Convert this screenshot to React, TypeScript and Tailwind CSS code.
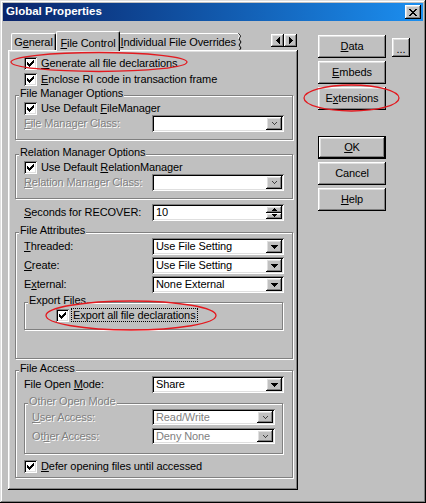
import React from 'react';

// classic 3D edges
const raised = 'shadow-[inset_-1px_-1px_0_#000,inset_1px_1px_0_#fff,inset_-2px_-2px_0_#808080,inset_2px_2px_0_#dfdfdf]';
const sunken = 'shadow-[inset_1px_1px_0_#808080,inset_-1px_-1px_0_#fff,inset_2px_2px_0_#000,inset_-2px_-2px_0_#dfdfdf]';
const etched = 'border border-[#808080] shadow-[inset_1px_1px_0_#fff,1px_1px_0_#fff]';
const dis = 'text-[#808080] [text-shadow:1px_1px_0_#fff]';

function CheckMark() {
  return (
    <svg width="7" height="7" viewBox="0 0 7 7" shapeRendering="crispEdges">
      <path d="M6 0h1v3h-1z M5 1h1v3h-1z M4 2h1v3h-1z M3 3h1v3h-1z M2 4h1v3h-1z M1 3h1v3h-1z M0 2h1v3h-1z" fill="#000" />
    </svg>
  );
}

function DownTri({ color = '#000' }: { color?: string }) {
  return (
    <svg width="7" height="4" viewBox="0 0 7 4" shapeRendering="crispEdges">
      <path d="M0 0h7v1h-7z M1 1h5v1h-5z M2 2h3v1h-3z M3 3h1v1h-1z" fill={color} />
    </svg>
  );
}

function Chevron() {
  return (
    <svg width="5" height="3" viewBox="0 0 5 3" shapeRendering="crispEdges">
      <path d="M0 0h1v1h-1z M4 0h1v1h-1z M1 1h1v1h-1z M3 1h1v1h-1z M2 2h1v1h-1z" fill="#404040" />
    </svg>
  );
}

function CheckBox({ children, className = '', focus = false }: { children: React.ReactNode; className?: string; focus?: boolean }) {
  return (
    <div className={`flex items-start ${className}`}>
      <span className={`mt-[1px] flex h-[13px] w-[13px] shrink-0 items-center justify-center bg-white ${sunken}`}>
        <CheckMark />
      </span>
      {focus ? (
        <span className="ml-[2px] border border-dotted border-black px-[1px] leading-[12px]">{children}</span>
      ) : (
        <span className="ml-[4px] leading-[15px]">{children}</span>
      )}
    </div>
  );
}

function Combo({ value = '', className = '', disabled = false }: { value?: string; className?: string; disabled?: boolean }) {
  return (
    <div className={`flex bg-white ${sunken} ${className}`}>
      <span className={`flex-1 self-center pl-[4px] leading-[13px] ${disabled ? 'text-[#808080]' : ''}`}>{value}</span>
      <span className={`my-[2px] mr-[2px] flex w-[16px] items-center justify-center bg-[#c0c0c0] ${raised}`}>
        {disabled ? <Chevron /> : <DownTri />}
      </span>
    </div>
  );
}

function Group({ label, className = '', disabled = false, children }: { label: string; className?: string; disabled?: boolean; children: React.ReactNode }) {
  return (
    <div className={`${etched} ${className}`}>
      <div className={`-mt-[9px] mb-[2px] ml-[3px] w-fit bg-[#c0c0c0] px-[1px] leading-[12px] ${disabled ? dis : ''}`}>{label}</div>
      {children}
    </div>
  );
}

function Btn({ children, className = '', def = false }: { children: React.ReactNode; className?: string; def?: boolean }) {
  if (def) {
    return (
      <div className={`border border-black ${className}`}>
        <div className={`flex h-full w-full items-center justify-center ${raised}`}>{children}</div>
      </div>
    );
  }
  return <div className={`flex items-center justify-center ${raised} ${className}`}>{children}</div>;
}

export default function App() {
  return (
    <div className="relative h-[503px] w-[426px] overflow-hidden bg-[#c0c0c0] font-['Liberation_Sans',Arial,sans-serif] text-[11px] tracking-[-0.1px] text-black shadow-[inset_-1px_-1px_0_#000,inset_1px_1px_0_#dfdfdf,inset_-2px_-2px_0_#808080,inset_2px_2px_0_#fff]">
      {/* title bar */}
      <div className="mx-[3px] mt-[3px] flex h-[18px] items-center justify-between bg-linear-to-r from-[#0a246a] to-[#1c8ff0]">
        <span className="pl-[3px] text-[11.5px] font-bold tracking-normal text-white">Global Properties</span>
        <span className={`mr-[2px] flex h-[14px] w-[16px] items-center justify-center bg-[#c0c0c0] ${raised}`}>
          <svg width="8" height="7" viewBox="0 0 8 7" shapeRendering="crispEdges">
            <path d="M0 0h2v1h-2z M6 0h2v1h-2z M1 1h2v1h-2z M5 1h2v1h-2z M2 2h4v1h-4z M3 3h2v1h-2z M2 4h4v1h-4z M1 5h2v1h-2z M5 5h2v1h-2z M0 6h2v1h-2z M6 6h2v1h-2z" fill="#000" />
          </svg>
        </span>
      </div>

      <div className="flex pl-[8px] pt-[10px]">
        {/* tab control */}
        <div className="w-[290px]">
          <div className="flex h-[19px] items-end pl-[3px]">
            <div className="flex h-[17px] w-[45px] items-center justify-center rounded-t-[2px] border-l border-t border-r border-white border-r-black pt-[1px] shadow-[inset_-1px_0_0_#808080]">
              G<u>e</u>neral
            </div>
            <div className="relative z-10 -mb-[1px] flex h-[20px] w-[64px] items-start justify-center rounded-t-[2px] border-l border-t border-r border-white border-r-black bg-[#c0c0c0] pt-[3px] shadow-[inset_-1px_0_0_#808080]">
              <u>F</u>ile Control
            </div>
            <div className="flex h-[17px] w-[118px] items-center justify-end border-t border-white pt-[1px] pr-[2px]">
              <u>I</u>ndividual File Overrides
            </div>
            <svg width="4" height="17" viewBox="0 0 4 17" className="self-end">
              <polyline points="0.5,0.5 2.5,3 1,6 3,9 1,12 3,15 1.5,17" fill="none" stroke="#000" strokeWidth="1" />
              <polyline points="0,1 1.5,3 0,6" fill="none" stroke="#fff" strokeWidth="1" />
            </svg>
            <div className="flex-1" />
            <div className="mb-[3px] mr-[1px] flex">
              <span className={`flex h-[13px] w-[13px] items-center justify-center bg-[#c0c0c0] ${raised}`}>
                <svg width="4" height="7" viewBox="0 0 4 7" shapeRendering="crispEdges">
                  <path d="M3 0h1v7h-1z M2 1h1v5h-1z M1 2h1v3h-1z M0 3h1v1h-1z" fill="#000" />
                </svg>
              </span>
              <span className={`flex h-[13px] w-[13px] items-center justify-center bg-[#c0c0c0] ${raised}`}>
                <svg width="4" height="7" viewBox="0 0 4 7" shapeRendering="crispEdges">
                  <path d="M0 0h1v7h-1z M1 1h1v5h-1z M2 2h1v3h-1z M3 3h1v1h-1z" fill="#000" />
                </svg>
              </span>
            </div>
          </div>

          {/* tab page */}
          <div className={`h-[440px] w-[290px] pt-[6px] ${raised}`}>
            <CheckBox className="h-[16px] pl-[16px]"><u>G</u>enerate all file declarations</CheckBox>
            <CheckBox className="h-[16px] pl-[16px]"><u>E</u>nclose RI code in transaction frame</CheckBox>

            <Group label="File Manager Options" className="ml-[7px] mr-[5px] mt-[7px] pb-[7px]">
              <CheckBox className="h-[14px] pl-[8px]">Use Default <u>F</u>ileManager</CheckBox>
              <div className="flex h-[17px] items-center pl-[8px]">
                <span className={`w-[128px] shrink-0 ${dis}`}><u>F</u>ile Manager Class:</span>
                <Combo className="h-[17px] w-[132px]" disabled />
              </div>
            </Group>

            <Group label="Relation Manager Options" className="ml-[7px] mr-[5px] mt-[14px] pb-[7px]">
              <CheckBox className="h-[14px] pl-[8px]">Use Default <u>R</u>elationManager</CheckBox>
              <div className="flex h-[17px] items-center pl-[8px]">
                <span className={`w-[128px] shrink-0 ${dis}`}><u>R</u>elation Manager Class:</span>
                <Combo className="h-[17px] w-[132px]" disabled />
              </div>
            </Group>

            <div className="mt-[5px] flex h-[17px] items-center pl-[16px]">
              <span className="w-[128px] shrink-0"><u>S</u>econds for RECOVER:</span>
              <div className={`flex h-[17px] w-[132px] bg-white ${sunken}`}>
                <span className="flex-1 self-center pl-[4px] leading-[13px]">10</span>
                <span className="my-[2px] mr-[2px] flex w-[16px] flex-col">
                  <span className={`flex flex-1 items-center justify-center bg-[#c0c0c0] ${raised}`}>
                    <svg width="5" height="3" viewBox="0 0 5 3" shapeRendering="crispEdges">
                      <path d="M2 0h1v1h-1z M1 1h3v1h-3z M0 2h5v1h-5z" fill="#000" />
                    </svg>
                  </span>
                  <span className={`flex flex-1 items-center justify-center bg-[#c0c0c0] ${raised}`}>
                    <svg width="5" height="3" viewBox="0 0 5 3" shapeRendering="crispEdges">
                      <path d="M0 0h5v1h-5z M1 1h3v1h-3z M2 2h1v1h-1z" fill="#000" />
                    </svg>
                  </span>
                </span>
              </div>
            </div>

            <Group label="File Attributes" className="ml-[7px] mr-[5px] mt-[11px] pb-[28px]">
              <div className="flex h-[17px] items-center pl-[8px]">
                <span className="w-[128px] shrink-0"><u>T</u>hreaded:</span>
                <Combo className="h-[17px] w-[132px]" value="Use File Setting" />
              </div>
              <div className="mt-[2px] flex h-[17px] items-center pl-[8px]">
                <span className="w-[128px] shrink-0"><u>C</u>reate:</span>
                <Combo className="h-[17px] w-[132px]" value="Use File Setting" />
              </div>
              <div className="mt-[2px] flex h-[17px] items-center pl-[8px]">
                <span className="w-[128px] shrink-0">E<u>x</u>ternal:</span>
                <Combo className="h-[17px] w-[132px]" value="None External" />
              </div>
              <Group label="Export Files" className="ml-[8px] mr-[9px] mt-[9px] pb-[7px]">
                <CheckBox className="h-[14px] pl-[31px]" focus>Export all file declarations</CheckBox>
              </Group>
            </Group>

            <Group label="File Access" className="ml-[7px] mr-[5px] mt-[11px] pb-[4px]">
              <div className="flex h-[17px] items-center pl-[8px]">
                <span className="w-[128px] shrink-0">File Open <u>M</u>ode:</span>
                <Combo className="h-[17px] w-[132px]" value="Share" />
              </div>
              <Group label="Other Open Mode" disabled className="ml-[8px] mr-[9px] mt-[10px] pb-[9px]">
                <div className="flex h-[16px] items-center pl-[7px]">
                  <span className={`w-[120px] shrink-0 ${dis}`}><u>U</u>ser Access:</span>
                  <Combo className="h-[16px] w-[123px]" value="Read/Write" disabled />
                </div>
                <div className="mt-[3px] flex h-[16px] items-center pl-[7px]">
                  <span className={`w-[120px] shrink-0 ${dis}`}>Ot<u>h</u>er Access:</span>
                  <Combo className="h-[16px] w-[123px]" value="Deny None" disabled />
                </div>
              </Group>
              <CheckBox className="mt-[5px] h-[14px] pl-[8px]"><u>D</u>efer opening files until accessed</CheckBox>
            </Group>
          </div>
        </div>

        {/* buttons */}
        <div className="ml-[20px] mt-[4px] flex flex-col">
          <div className="flex items-start">
            <Btn className="h-[23px] w-[68px]"><u>D</u>ata</Btn>
            <Btn className="ml-[6px] mt-[3px] h-[19px] w-[18px]"><span className="pt-[3px]">...</span></Btn>
          </div>
          <Btn className="mt-[3px] h-[23px] w-[68px]"><u>E</u>mbeds</Btn>
          <Btn className="mt-[3px] h-[23px] w-[68px]">E<u>x</u>tensions</Btn>
          <Btn def className="mt-[26px] h-[23px] w-[68px]"><u>O</u>K</Btn>
          <Btn className="mt-[3px] h-[23px] w-[68px]">Cancel</Btn>
          <Btn className="mt-[3px] h-[23px] w-[68px]"><u>H</u>elp</Btn>
        </div>
      </div>

      {/* red annotation ellipses */}
      <svg className="pointer-events-none absolute left-0 top-0" width="426" height="503">
        <ellipse cx="99" cy="62" rx="88" ry="9.5" fill="none" stroke="#e3191f" strokeWidth="1.3" />
        <ellipse cx="351.5" cy="98" rx="47.5" ry="13" fill="none" stroke="#e3191f" strokeWidth="1.3" />
        <ellipse cx="131" cy="315.5" rx="85" ry="14.5" fill="none" stroke="#e3191f" strokeWidth="1.3" />
      </svg>
    </div>
  );
}
